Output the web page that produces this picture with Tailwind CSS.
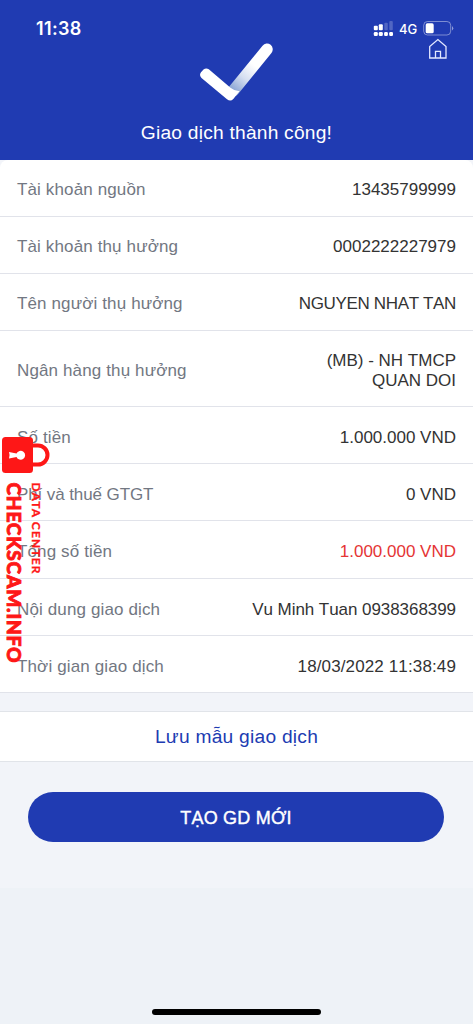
<!DOCTYPE html>
<html lang="vi">
<head>
<meta charset="utf-8">
<title>Giao dịch thành công</title>
<script src="https://cdn.jsdelivr.net/npm/@tailwindcss/browser@4"></script>
</head>
<body class="relative flex h-[1024px] w-[473px] flex-col overflow-hidden bg-[#eef2f7] font-['Liberation_Sans',sans-serif] text-[17px] leading-5 text-[#333]">
<header class="relative h-40 shrink-0 bg-[#203bb2] text-white">
  <div class="flex h-10 items-start justify-between pl-9 pr-[19px]">
    <span class="mt-[18px] font-['Inter',sans-serif] text-[18px] font-semibold leading-[22px] tracking-[0.35px]">11:38</span>
    <div class="mt-5 flex items-center">
      <svg width="22" height="18" viewBox="0 0 22 18" fill="#fff">
        <rect x=".8" y="5.700" width="4" height="4.600" rx="1"/><rect x="5.800" y="4.200" width="4" height="6.100" rx="1"/>
        <rect x="11.300" y="2.700" width="3.500" height="7.600" rx="1" opacity=".22"/><rect x="16.300" y="1" width="3.500" height="9.300" rx="1" opacity=".22"/>
        <rect x=".8" y="12" width="4" height="4" rx="1.200"/><rect x="5.800" y="12" width="4" height="4" rx="1.200"/><rect x="11.100" y="12" width="3.800" height="4" rx="1.200"/><rect x="16.200" y="12" width="3.800" height="4" rx="1.200"/>
      </svg>
      <span class="ml-[4px] w-5 font-['Inter',sans-serif] text-[13px] font-medium leading-[18px]">4G</span>
      <svg class="ml-[4px]" width="31" height="16" viewBox="0 0 31 16"><rect x=".7" y=".5" width="27" height="13.500" rx="3.800" fill="none" stroke="#fff" stroke-opacity=".42"/><rect x="2.700" y="2.300" width="8" height="10" rx="1.600" fill="#fff"/><path d="M29 5q2.500 2.300 0 4.600z" fill="#fff" opacity=".5"/></svg>
    </div>
  </div>
  <svg class="absolute left-[428px] top-[38px]" width="20" height="22" viewBox="0 0 20 22" fill="none" stroke="#e4e9ff" stroke-width="1.300"><path d="M1.700 8.600V20H18V8.600L9.900 1.500ZM7.500 20V13.400h5V20"/></svg>
  <svg class="absolute left-[196px] top-[40px]" width="80" height="64" viewBox="0 0 80 64">
    <defs><linearGradient id="fold" gradientUnits="userSpaceOnUse" x1="37" y1="50" x2="58" y2="25"><stop stop-color="#8ca6d5"/><stop offset=".5" stop-color="#d6dff1"/><stop offset="1" stop-color="#fff"/></linearGradient></defs>
    <path d="M37.500 50.500L71 9.300" stroke="url(#fold)" stroke-width="11.500" stroke-linecap="round"/>
    <path d="M12.800 29.200Q10 27.500 7.500 29.500L5 32.200Q2.800 35 5.500 38L31 59.300Q34.500 62 37.300 59L43.500 51.200Q38.500 51 34.500 47.700Z" fill="#fff"/>
  </svg>
  <h1 class="mt-[81px] text-center text-[19.200px] leading-6 tracking-[0.22px]">Giao dịch thành công!</h1>
</header>
<main class="flex h-[728px] shrink-0 flex-col bg-[#f2f4f9]">
  <dl class="flex flex-col rounded-t-lg bg-white [&_dt]:tracking-[0.13px] [&_dt]:text-[#727782] [&_dd]:text-right [&_dd]:[font-kerning:none] [&>div]:flex [&>div]:shrink-0 [&>div]:items-center [&>div]:justify-between [&>div]:border-b [&>div]:border-[#e1e3ea] [&>div]:pl-[17px] [&>div]:pr-[17px]">
    <div class="h-[57px] pt-[3px]"><dt>Tài khoản nguồn</dt><dd>13435799999</dd></div>
    <div class="h-[57px] pt-[3px]"><dt>Tài khoản thụ hưởng</dt><dd>0002222227979</dd></div>
    <div class="h-[57px] pt-[3px]"><dt>Tên người thụ hưởng</dt><dd class="tracking-[-0.35px]">NGUYEN NHAT TAN</dd></div>
    <div class="h-[76px] pt-[5px]"><dt>Ngân hàng thụ hưởng</dt><dd>(MB) - NH TMCP<br>QUAN DOI</dd></div>
    <div class="h-[57px] pt-[5px]"><dt>Số tiền</dt><dd>1.000.000 VND</dd></div>
    <div class="h-[57px] pt-[5px]"><dt class="[&&]:tracking-[-0.1px]">Phí và thuế GTGT</dt><dd>0 VND</dd></div>
    <div class="h-[58px] pt-[5px]"><dt>Tổng số tiền</dt><dd class="text-[#e53535]">1.000.000 VND</dd></div>
    <div class="h-[57px] pt-[5px]"><dt>Nội dung giao dịch</dt><dd class="tracking-[-0.06px]">Vu Minh Tuan 0938368399</dd></div>
    <div class="h-[57px] pt-[5px]"><dt>Thời gian giao dịch</dt><dd class="tracking-[0.13px]">18/03/2022 11:38:49</dd></div>
  </dl>
  <button class="mt-[18px] h-[51px] shrink-0 border-y border-[#e1e4e9] bg-white pt-px text-[19.200px] tracking-[0.25px] text-[#203bb2]">Lưu mẫu giao dịch</button>
  <button class="ml-[28px] mr-[29px] mt-[30px] h-[50px] shrink-0 rounded-full bg-[#203bb2] pt-px text-[18px] tracking-[0.2px] text-white [-webkit-text-stroke:0.4px_white]">TẠO GD MỚI</button>
</main>
<footer class="flex grow items-end justify-center pb-[9px]"><div class="h-[6px] w-[169px] rounded-full bg-black"></div></footer>

<aside class="absolute left-[2px] top-[437px] font-['Lato',sans-serif] text-[#fe1717]">
  <svg class="block" width="49" height="230" viewBox="0 0 49 230">
    <path d="M30 8.500h6a9.500 9.500 0 0 1 0 19h-6" fill="none" stroke="currentColor" stroke-width="4"/>
    <rect width="31" height="36" rx="3.500" fill="currentColor"/>
    <path d="M7 15l7.500 1.500a4.500 4.500 0 1 1 0 3.500L7 21.500q1.200-3.200 0-6.500z" fill="#fff"/>
    <g fill="currentColor" stroke="currentColor">
      <text transform="translate(5.300 45.500) rotate(90)" font-size="19" font-weight="900" textLength="180" stroke-width=".9">CHECKSCAM.INFO</text>
      <text transform="translate(29.500 45.500) rotate(90)" font-size="12" font-weight="700" textLength="91" stroke-width=".3">DATA CENTER</text>
    </g>
  </svg>
</aside>
</body>
</html>
